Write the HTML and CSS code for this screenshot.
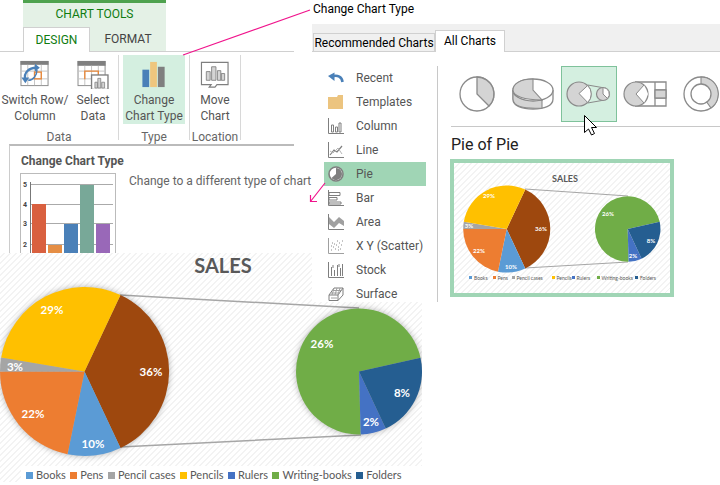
FILE: index.html
```html
<!DOCTYPE html>
<html lang="en">
<head>
    <meta charset="UTF-8">
    <title>Change Chart Type</title>
    <link rel="stylesheet" href="styles.css">
</head>
<body>
<svg class="defs" width="0" height="0">
    <defs>
        <g id="big-pie">
            <path fill="#9e480e" d="M0 0L36 -76.5A84.5 84.5 0 0 1 36 76.5Z"/>
            <path fill="#5b9bd5" d="M0 0L36 76.5A84.5 84.5 0 0 1 -17 82.8Z"/>
            <path fill="#ed7d31" d="M0 0L-17 82.8A84.5 84.5 0 0 1 -84.5 0Z"/>
            <path fill="#a5a5a5" d="M0 0L-84.5 0A84.5 84.5 0 0 1 -83.3 -14Z"/>
            <path fill="#ffc000" d="M0 0L-83.3 -14A84.5 84.5 0 0 1 36 -76.5Z"/>
        </g>
        <g id="small-pie">
            <path fill="#70ad47" d="M0 0L61.5 -13.8A63 63 0 1 0 1.7 63Z"/>
            <path fill="#4472c4" d="M0 0L1.7 63A63 63 0 0 0 26.7 57Z"/>
            <path fill="#255e91" d="M0 0L26.7 57A63 63 0 0 0 61.5 -13.8Z"/>
        </g>
    </defs>
</svg>

<div class="canvas">
    <div class="ribbon">
        <div class="context">
            <div class="context-title">CHART TOOLS</div>
            <div class="tabs">
                <div class="tab tab-active">DESIGN</div>
                <div class="tab">FORMAT</div>
            </div>
        </div>
        <div class="groups">
            <div class="group group-data">
                <div class="buttons">
                    <div class="btn btn-switch">
                        <svg class="btn-icon" width="30" height="30" viewBox="0 0 30 30">
                            <rect x="0.5" y="1.5" width="28" height="25" fill="#fff" stroke="#8a8a8a"/>
                            <rect x="0" y="1" width="29" height="4" fill="#7f7f7f"/>
                            <path d="M0 11.5H29M0 19.5H29M7.5 5V26M14.5 5V26M21.5 5V26" stroke="#c4c4c4" fill="none"/>
                            <rect x="14.5" y="12.5" width="7" height="7" fill="none" stroke="#e8883a" stroke-width="1.4"/>
                            <path d="M5 20C3 13 9 8 16 8" fill="none" stroke="#4a80b8" stroke-width="2.4"/>
                            <path d="M15 4L20 8L15 12ZM1 18L9 18L5 24Z" fill="#4a80b8"/>
                            <path d="M17 10C17 16 13 21 8 21" fill="none" stroke="#4a80b8" stroke-width="1.6"/>
                        </svg>
                        <span>Switch Row/<br>Column</span>
                    </div>
                    <div class="btn btn-select">
                        <svg class="btn-icon" width="32" height="30" viewBox="0 0 32 30">
                            <rect x="0.5" y="1.5" width="28" height="25" fill="#fff" stroke="#8a8a8a"/>
                            <rect x="0" y="1" width="29" height="5" fill="#7f7f7f"/>
                            <path d="M0 11.5H29M0 19.5H29M7.5 6V26M14.5 6V26M21.5 6V26" stroke="#c4c4c4" fill="none"/>
                            <path d="M7.5 20V11.5H21.5V17" fill="none" stroke="#e8883a" stroke-width="1.4"/>
                            <rect x="14.5" y="15.5" width="17" height="15" fill="#fff" stroke="#7f7f7f" stroke-width="1.4"/>
                            <path d="M18 29V23H20.5V29ZM21 29V19H24V29ZM25 29V23H28V29Z" fill="#d4d4d4" stroke="#7f7f7f" stroke-width=".8"/>
                        </svg>
                        <span>Select<br>Data</span>
                    </div>
                </div>
                <div class="group-label">Data</div>
            </div>
            <div class="group group-type">
                <div class="buttons">
                    <div class="btn btn-change">
                        <svg class="btn-icon" width="24" height="30" viewBox="0 0 24 30">
                            <rect x="0" y="10" width="7" height="18" fill="#4a80b8"/>
                            <rect x="8" y="2" width="7" height="26" fill="#eec67e"/>
                            <rect x="16" y="7" width="7" height="21" fill="#7f7f7f"/>
                        </svg>
                        <span>Change<br>Chart Type</span>
                    </div>
                </div>
                <div class="group-label">Type</div>
            </div>
            <div class="group group-location">
                <div class="buttons">
                    <div class="btn btn-move">
                        <svg class="btn-icon" width="30" height="30" viewBox="0 0 30 30">
                            <path d="M1 2.5H28.5V25.5H17L15 28H9L11 25.5H1Z" fill="#fff" stroke="#7f7f7f" stroke-width="1.2"/>
                            <path d="M6 21V12H10V21ZM11.5 21V7H16V21ZM17.5 21V11H21V21ZM21.5 21V14H25V21Z" fill="#d4d4d4" stroke="#7f7f7f" stroke-width=".9"/>
                        </svg>
                        <span>Move<br>Chart</span>
                    </div>
                </div>
                <div class="group-label">Location</div>
            </div>
        </div>
    </div>

    <div class="tip">
        <div class="tip-title">Change Chart Type</div>
        <div class="tip-body">
            <svg class="tip-chart" width="96" height="81" viewBox="20 173 96 81">
                <rect x="20.5" y="173.5" width="95" height="81" fill="#fff" stroke="#bbb"/>
                <path d="M30 184.5H113M30 204.5H113M30 223.5H113M30 244.5H113" stroke="#aaa"/>
                <path d="M30.5 182V253" stroke="#777"/>
                <rect x="32" y="204" width="14" height="50" fill="#d9603f"/>
                <rect x="48" y="245" width="14" height="9" fill="#e58e45"/>
                <rect x="64" y="224" width="14" height="30" fill="#4a80b8"/>
                <rect x="80" y="185" width="14" height="69" fill="#78a898"/>
                <rect x="96" y="224" width="14" height="30" fill="#9968b8"/>
                <text class="tip-axis" x="23" y="187">5</text>
                <text class="tip-axis" x="23" y="207">4</text>
                <text class="tip-axis" x="23" y="226">3</text>
                <text class="tip-axis" x="23" y="247">2</text>
            </svg>
            <div class="tip-text">Change to a different type of chart</div>
        </div>
    </div>

    <div class="sales">
        <div class="sales-title">SALES</div>
        <svg class="sales-pies" width="422" height="186" viewBox="0 280 422 186">
            <path d="M120 295L359 308M120 447L361 435" stroke="#a6a6a6" stroke-width="1.5"/>
            <use class="pie-shadow" href="#big-pie" transform="translate(84.5 371.5)"/>
            <use class="pie-shadow" href="#small-pie" transform="translate(359 371.5)"/>
            <g class="pct">
                <text x="52" y="314">29%</text>
                <text x="15" y="371">3%</text>
                <text x="33" y="418">22%</text>
                <text x="93" y="448">10%</text>
                <text x="151" y="376">36%</text>
                <text x="322" y="348">26%</text>
                <text x="402" y="397">8%</text>
                <text x="371" y="426">2%</text>
            </g>
        </svg>
        <div class="legend">
            <span class="key"><i class="c-books"></i>Books</span>
            <span class="key"><i class="c-pens"></i>Pens</span>
            <span class="key"><i class="c-cases"></i>Pencil cases</span>
            <span class="key"><i class="c-pencils"></i>Pencils</span>
            <span class="key"><i class="c-rulers"></i>Rulers</span>
            <span class="key"><i class="c-writing"></i>Writing-books</span>
            <span class="key"><i class="c-folders"></i>Folders</span>
        </div>
    </div>

    <div class="dialog">
        <div class="dialog-tabs">
            <div class="dtab">Recommended Charts</div>
            <div class="dtab dtab-active">All Charts</div>
        </div>
        <div class="dialog-body">
            <ul class="types">
                <li>
                    <svg width="16" height="16" viewBox="0 0 16 16"><path d="M14.5 12C14 7 10 4.5 3.5 6.5" fill="none" stroke="#4a80b8" stroke-width="2.6"/><path d="M0 6L6.5 2.5L6.5 11Z" fill="#4a80b8"/></svg>
                    Recent
                </li>
                <li>
                    <svg width="16" height="16" viewBox="0 0 16 16"><path d="M0 3H9L10 1H15V15H0Z" fill="#ecc47f"/></svg>
                    Templates
                </li>
                <li>
                    <svg width="16" height="16" viewBox="0 0 16 16"><g fill="none" stroke="#7f7f7f"><path d="M.5 0V15.5H16"/><path d="M3.5 14V7H5.5V14ZM7.5 14V9H9.5V14ZM11 14V5H13V14Z"/></g></svg>
                    Column
                </li>
                <li>
                    <svg width="16" height="16" viewBox="0 0 16 16"><g fill="none" stroke="#7f7f7f"><path d="M.5 0V15.5H16"/><path d="M2 13L6 8L9 10L14 4" stroke-width="1.2"/><path d="M2 9L5 11L10 6L14 12" stroke="#b5b5b5"/></g></svg>
                    Line
                </li>
                <li class="selected">
                    <svg width="16" height="16" viewBox="0 0 16 16"><circle cx="8" cy="8" r="7" fill="#fff" stroke="#7f7f7f" stroke-width="1.6"/><path d="M8 8V2A6 6 0 1 1 3.5 12Z" fill="#7f7f7f"/></svg>
                    Pie
                </li>
                <li>
                    <svg width="16" height="16" viewBox="0 0 16 16"><g fill="none" stroke="#7f7f7f"><path d="M.5 0V15.5H16"/><path d="M1 2.5H12V5.5H1ZM1 7.5H9V10H1ZM1 12H13V14H1Z"/></g></svg>
                    Bar
                </li>
                <li>
                    <svg width="16" height="16" viewBox="0 0 16 16"><path d="M.5 0V15.5H16" fill="none" stroke="#7f7f7f"/><path d="M1 3L6 8L11 3L16 7V12L11 9L6 14L1 10Z" fill="#a0a0a0"/></svg>
                    Area
                </li>
                <li>
                    <svg width="16" height="16" viewBox="0 0 16 16"><path d="M.5 0V15.5H16" fill="none" stroke="#a0a0a0"/><path d="M3 12h1M5 9h1M7 11h1M8 7h1M10 9h1M11 5h1M13 7h1M6 6h1M12 11h1M9 3h1M14 3h1M4 5h1M3 8h1M10 12h1" stroke="#8a8a8a"/></svg>
                    X Y (Scatter)
                </li>
                <li>
                    <svg width="16" height="16" viewBox="0 0 16 16"><g fill="none" stroke="#7f7f7f"><path d="M.5 0V15.5H16"/><path d="M3.5 5V14M6.5 8V14M9.5 3V14M12.5 6V14M14.5 2V14M5 3V6M11 2V5"/></g></svg>
                    Stock
                </li>
                <li>
                    <svg width="16" height="16" viewBox="0 0 16 16"><g fill="none" stroke="#7f7f7f"><path d="M1 9L6 2H15V9L10 14.5H1ZM1 9H10V14.5M10 9L15 2"/><path d="M3 7H12M5 4.5H14M6 2L4 9M9 2L7 9M12 2L10 9M3 12H9" stroke="#a0a0a0"/></g></svg>
                    Surface
                </li>
            </ul>
            <div class="gallery">
                <div class="gallery-icons">
                    <div class="gicon">
                        <svg width="38" height="38" viewBox="0 0 38 38"><circle cx="19" cy="19" r="17" fill="#fff" stroke="#8a8a8a" stroke-width="1.3"/><path d="M19 2A17 17 0 0 1 31 31L19 19Z" fill="#d4d4d4" stroke="#8a8a8a" stroke-width="1.3"/></svg>
                    </div>
                    <div class="gicon">
                        <svg width="42" height="38" viewBox="0 0 42 38"><path d="M1 15V24C1 31 10 34 21 34S41 31 41 24V15" fill="#fff" stroke="#8a8a8a" stroke-width="1.3"/><path d="M1 15V24C1 31 10 34 30 33V25C10 26 1 22 1 15Z" fill="#d4d4d4" stroke="#8a8a8a" stroke-width="1.1"/><ellipse cx="21" cy="15" rx="20" ry="11" fill="#fff" stroke="#8a8a8a" stroke-width="1.3"/><path d="M21 4C8 4 1 9 1 15C1 21 12 25 30 25L21 15Z" fill="#d4d4d4" stroke="#8a8a8a" stroke-width="1.1"/></svg>
                    </div>
                    <div class="gicon gicon-active">
                        <svg width="46" height="30" viewBox="0 0 46 30"><path d="M21.7 6L37 8.7M21.7 24L37 21.3" stroke="#8a8a8a"/><circle cx="13" cy="15" r="12" fill="#d4d4d4" stroke="#8a8a8a" stroke-width="1.2"/><path d="M13 14.5L21.7 6.5A12 12 0 0 1 21.7 23.5Z" fill="#fff" stroke="#8a8a8a"/><circle cx="37" cy="15" r="6.5" fill="#d4d4d4" stroke="#8a8a8a" stroke-width="1.2"/><path d="M37 15V8.5A6.5 6.5 0 0 1 41.5 19.5Z" fill="#fff" stroke="#8a8a8a"/></svg>
                    </div>
                    <div class="gicon">
                        <svg width="44" height="28" viewBox="0 0 44 28"><path d="M12 2H43V26H12" fill="#fff" stroke="#8a8a8a" stroke-width="1.3"/><path d="M32 2V26M32 10H43M32 18H43" stroke="#8a8a8a" stroke-width="1.3"/><rect x="32" y="10" width="11" height="8" fill="#d4d4d4" stroke="#8a8a8a" stroke-width="1.3"/><circle cx="13" cy="14" r="12" fill="#d4d4d4" stroke="#8a8a8a" stroke-width="1.2"/><path d="M13 14L21 5L25 14L21 23Z" fill="#fff"/><path d="M21 5L13 14L21 23" fill="none" stroke="#8a8a8a"/></svg>
                    </div>
                    <div class="gicon">
                        <svg width="38" height="38" viewBox="0 0 38 38"><circle cx="19" cy="19" r="17" fill="#fff" stroke="#8a8a8a" stroke-width="1.3"/><path d="M19 2A17 17 0 0 1 29 33L24 26A10 10 0 0 0 19 9Z" fill="#d4d4d4" stroke="#8a8a8a" stroke-width="1.1"/><circle cx="19" cy="19" r="10" fill="#fff" stroke="#8a8a8a" stroke-width="1.3"/></svg>
                    </div>
                </div>
                <div class="gallery-name">Pie of Pie</div>
                <div class="preview">
                    <svg width="216" height="130" viewBox="454 163 216 130">
                        <text class="mini-title" x="565" y="182">SALES</text>
                        <path d="M525 189L628 196M525 268L628 262" stroke="#a6a6a6"/>
                        <use href="#big-pie" transform="translate(506.7 229) scale(.515)"/>
                        <use href="#small-pie" transform="translate(627.7 229) scale(.52)"/>
                        <g class="mini-pct">
                            <text x="489" y="198">29%</text>
                            <text x="469" y="228">3%</text>
                            <text x="479" y="253">22%</text>
                            <text x="511" y="269">10%</text>
                            <text x="541" y="231">36%</text>
                            <text x="608" y="216">26%</text>
                            <text x="651" y="243">8%</text>
                            <text x="633" y="258">2%</text>
                        </g>
                        <g class="mini-legend">
                            <rect x="469" y="276" width="3" height="3" fill="#5b9bd5"/><text x="474" y="279.5">Books</text>
                            <rect x="493" y="276" width="3" height="3" fill="#ed7d31"/><text x="497.5" y="279.5">Pens</text>
                            <rect x="512" y="276" width="3" height="3" fill="#a5a5a5"/><text x="516.5" y="279.5">Pencil cases</text>
                            <rect x="552" y="276" width="3" height="3" fill="#ffc000"/><text x="556.5" y="279.5">Pencils</text>
                            <rect x="572" y="276" width="3" height="3" fill="#4472c4"/><text x="576.5" y="279.5">Rulers</text>
                            <rect x="597" y="276" width="3" height="3" fill="#70ad47"/><text x="601.5" y="279.5">Writing-books</text>
                            <rect x="635" y="276" width="3" height="3" fill="#255e91"/><text x="640" y="279.5">Folders</text>
                        </g>
                    </svg>
                </div>
            </div>
        </div>
    </div>

    <div class="callout">Change Chart Type</div>

    <svg class="overlay" width="720" height="485" viewBox="0 0 720 485">
        <path d="M183 55L310 10" class="pink"/>
        <path d="M325 183L310.5 201.5M310.5 195V201.5H317" class="pink"/>
        <path d="M584.5 115.5V132.5L588.5 129L591.5 135L594.5 133.5L591.5 127.5H596.5Z" fill="#fff" stroke="#000"/>
    </svg>
</div>
</body>
</html>
```

FILE: styles.css
```css
body {
    margin: 0;
    background: #fff;
    font-family: Roboto, Arial, sans-serif;
    font-size: 12px;
    color: #555;
}

.defs {
    position: absolute;
}

.canvas {
    position: relative;
    width: 720px;
    height: 485px;
    overflow: hidden;
}

/* ribbon */
.ribbon {
    position: absolute;
    top: 0;
    left: 0;
    width: 294px;
}

.context {
    width: 143px;
    height: 51px;
    margin-left: 23px;
    background: #e4f1e6;
    border-top: 3px solid #4ea24e;
    box-sizing: border-box;
}

.context-title {
    height: 24px;
    line-height: 22px;
    text-align: center;
    color: #107c10;
}

.tabs {
    display: flex;
}

.tab {
    width: 76px;
    height: 24px;
    line-height: 24px;
    text-align: center;
    color: #444;
}

.tab-active {
    width: 67px;
    height: 25px;
    box-sizing: border-box;
    background: #fff;
    border: 1px solid #d0d0d0;
    border-bottom: 0;
    color: #107c10;
    position: relative;
    z-index: 1;
}

.groups {
    display: flex;
    height: 92px;
    padding-top: 3px;
    box-sizing: border-box;
    border-top: 1px solid #d0d0d0;
}

.group {
    display: flex;
    flex-direction: column;
    height: 85px;
    box-sizing: border-box;
    border-right: 1px solid #d8d8d8;
}

.group-data {
    width: 119px;
}

.group-type {
    width: 71px;
    padding-left: 4px;
}

.group-location {
    width: 51px;
}

.buttons {
    display: flex;
    height: 69px;
}

.btn {
    display: flex;
    flex-direction: column;
    align-items: center;
    line-height: 16px;
    text-align: center;
    white-space: nowrap;
}

.btn-icon {
    display: block;
    height: 30px;
    margin: 5px 0 3px;
}

.btn-switch {
    width: 70px;
}

.btn-select {
    width: 46px;
}

.btn-change {
    width: 62px;
    background: #d4efe0;
}

.btn-move {
    width: 50px;
}

.group-label {
    line-height: 16px;
    padding-top: 5px;
    text-align: center;
    color: #666;
}

.group-type .group-label {
    padding-right: 4px;
}

/* tooltip */
.tip {
    position: absolute;
    top: 144px;
    left: 9px;
    width: 285px;
    height: 120px;
    box-sizing: border-box;
    padding: 7px 0 0 10px;
    border-top: 2px solid #bbb;
    border-left: 1px solid #ccc;
}

.tip-title {
    margin-left: 1px;
    font-weight: 700;
    line-height: 16px;
    color: #555;
}

.tip-body {
    display: flex;
    gap: 13px;
    margin-top: 4px;
}

.tip-chart {
    display: block;
    flex: none;
}

.tip-axis {
    font-size: 7px;
    font-weight: 700;
    fill: #444;
}

.tip-text {
    line-height: 16px;
    white-space: nowrap;
    color: #666;
}

/* big chart */
.sales {
    position: absolute;
    top: 253px;
    left: 0;
    width: 422px;
    height: 229px;
    font-family: Lato, Arial, sans-serif;
    background: repeating-linear-gradient(-45deg, #fff 0 2.83px, #f3f3f3 2.83px 4.24px);
}

.sales-title {
    height: 27px;
    line-height: 25px;
    padding-left: 24px;
    text-align: center;
    font-size: 20px;
    font-weight: 700;
    color: #595959;
}

.sales-pies {
    display: block;
}

.pie-shadow {
    filter: drop-shadow(0 0 3px rgba(0, 0, 0, 0.3));
}

.pct text {
    font-size: 11.5px;
    font-weight: 700;
    fill: #fff;
    text-anchor: middle;
}

.legend {
    display: flex;
    gap: 4.5px;
    height: 16px;
    margin-left: 21px;
    padding: 2px 0 0 5px;
    box-sizing: border-box;
    background: #fff;
    font-size: 11px;
    line-height: 16px;
    color: #595959;
}

.key {
    display: flex;
    align-items: center;
    gap: 3px;
    white-space: nowrap;
}

.key i {
    width: 7px;
    height: 7px;
}

.c-books { background: #5b9bd5; }
.c-pens { background: #ed7d31; }
.c-cases { background: #a5a5a5; }
.c-pencils { background: #ffc000; }
.c-rulers { background: #4472c4; }
.c-writing { background: #70ad47; }
.c-folders { background: #255e91; }

/* dialog */
.dialog {
    position: absolute;
    top: 24px;
    left: 312px;
    width: 408px;
    height: 278px;
    background: #fff;
}

.dialog-tabs {
    display: flex;
    align-items: flex-end;
    height: 28px;
    padding-left: 1px;
    box-sizing: border-box;
    background: #f0f0f0;
    border-bottom: 1px solid #d0d0d0;
}

.dtab {
    height: 18px;
    line-height: 18px;
    box-sizing: border-box;
    width: 122px;
    border: 1px solid #d0d0d0;
    border-bottom: 0;
    color: #000;
    text-align: center;
    white-space: nowrap;
}

.dtab-active {
    width: 70px;
    height: 22px;
    line-height: 21px;
    background: #fff;
    margin-bottom: -1px;
}

.dialog-body {
    display: flex;
    padding-top: 14px;
}

.types {
    width: 126px;
    height: 236px;
    margin: 0;
    padding: 0 0 0 12px;
    box-sizing: border-box;
    list-style: none;
    border-right: 1px solid #c8c8c8;
}

.types li {
    display: flex;
    align-items: center;
    gap: 12px;
    width: 102px;
    height: 24px;
    padding-left: 4px;
    box-sizing: border-box;
    line-height: 24px;
    white-space: nowrap;
}

.types .selected {
    background: #a0d5b5;
}

.gallery {
    flex: 1;
    min-width: 0;
    padding-left: 11px;
    overflow: hidden;
}

.gallery-icons {
    display: flex;
    height: 61px;
    margin-left: 2px;
    margin-right: -20px;
    border-bottom: 1px solid #c8c8c8;
    box-sizing: border-box;
}

.gicon {
    display: flex;
    flex: none;
    align-items: center;
    justify-content: center;
    width: 56px;
    height: 56px;
    box-sizing: border-box;
}

.gicon:first-child {
    margin-left: -2px;
}

.gicon-active {
    background: #d4efe0;
    border: 1px solid #7fc29b;
}

.gallery-name {
    margin: 7px 0 3px 2px;
    line-height: 22px;
    font-size: 16px;
    color: #222;
}

.preview {
    width: 224px;
    height: 138px;
    margin-left: 1px;
    box-sizing: border-box;
    border: 4px solid #a0d5b5;
    background: repeating-linear-gradient(-45deg, #fff 0 2.83px, #f3f3f3 2.83px 4.24px);
    font-family: Lato, Arial, sans-serif;
}

.preview svg {
    display: block;
}

.mini-title {
    font-size: 9px;
    font-weight: 700;
    fill: #595959;
    text-anchor: middle;
}

.mini-pct text {
    font-size: 6px;
    font-weight: 700;
    fill: #fff;
    text-anchor: middle;
}

.mini-legend text {
    font-size: 5px;
    fill: #595959;
}

/* annotations */
.callout {
    position: absolute;
    top: 1px;
    left: 313px;
    line-height: 16px;
    color: #000;
}

.overlay {
    position: absolute;
    top: 0;
    left: 0;
    pointer-events: none;
}

.pink {
    fill: none;
    stroke: #f0148c;
    stroke-width: 1.2;
}
```
